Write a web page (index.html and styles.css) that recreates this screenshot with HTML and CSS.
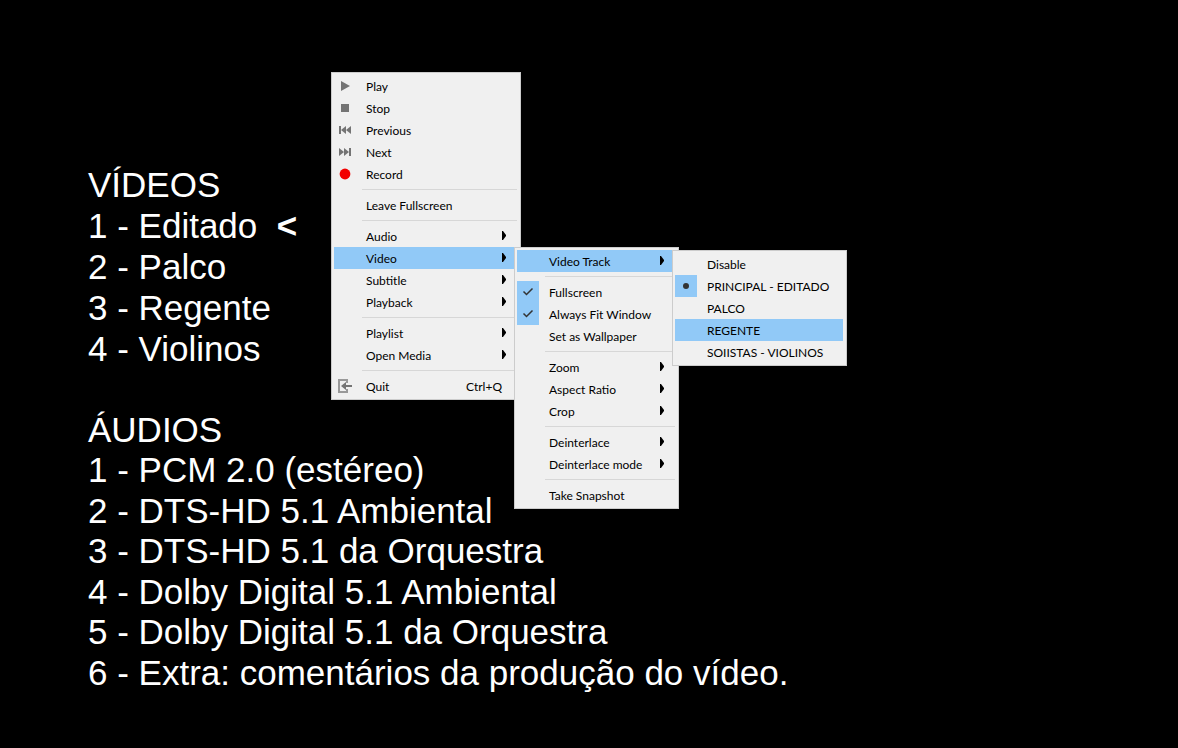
FILE: index.html
```html
<!DOCTYPE html>
<html lang="pt-BR">
<head>
<meta charset="utf-8">
<title>Vídeos e áudios</title>
<link rel="stylesheet" href="styles.css">
</head>
<body>
<main class="screen">
  <section class="tracks videos">
    <h2>VÍDEOS</h2>
    <ul>
      <li>1 - Editado&nbsp; <b>&lt;</b></li>
      <li>2 - Palco</li>
      <li>3 - Regente</li>
      <li>4 - Violinos</li>
    </ul>
  </section>
  <section class="tracks audios">
    <h2>ÁUDIOS</h2>
    <ul>
      <li>1 - PCM 2.0 (estéreo)</li>
      <li>2 - DTS-HD 5.1 Ambiental</li>
      <li>3 - DTS-HD 5.1 da Orquestra</li>
      <li>4 - Dolby Digital 5.1 Ambiental</li>
      <li>5 - Dolby Digital 5.1 da Orquestra</li>
      <li>6 - Extra: comentários da produção do vídeo.</li>
    </ul>
  </section>
</main>

<ul class="menu menu-main">
  <li><button class="item"><svg class="icon" viewBox="0 0 22 22"><path d="M7 6v10l9-5z"/></svg><span class="label">Play</span></button></li>
  <li><button class="item"><svg class="icon" viewBox="0 0 22 22"><path d="M7 7h8v8H7z"/></svg><span class="label">Stop</span></button></li>
  <li><button class="item"><svg class="icon" viewBox="0 0 22 22"><path d="M5 7h2v8H5zM12 7v8l-5-4zM17 7v8l-5-4z"/></svg><span class="label">Previous</span></button></li>
  <li><button class="item"><svg class="icon" viewBox="0 0 22 22"><path d="M15 7h2v8h-2zM5 7v8l5-4zM10 7v8l5-4z"/></svg><span class="label">Next</span></button></li>
  <li><button class="item"><svg class="icon record" viewBox="0 0 22 22"><circle cx="11" cy="11" r="5.4"/></svg><span class="label">Record</span></button></li>
  <li class="separator"></li>
  <li><button class="item"><span class="label">Leave Fullscreen</span></button></li>
  <li class="separator"></li>
  <li><button class="item"><span class="label">Audio</span><svg class="arrow" viewBox="0 0 4 9"><path d="M0 0h1l3 4v1l-3 4H0z"/></svg></button></li>
  <li class="parent">
    <button class="item active"><span class="label">Video</span><svg class="arrow" viewBox="0 0 4 9"><path d="M0 0h1l3 4v1l-3 4H0z"/></svg></button>
    <ul class="menu menu-video">
      <li class="parent">
        <button class="item active"><span class="label">Video Track</span><svg class="arrow" viewBox="0 0 4 9"><path d="M0 0h1l3 4v1l-3 4H0z"/></svg></button>
        <ul class="menu menu-track">
          <li><label class="item"><input type="radio" name="track"><span class="label">Disable</span></label></li>
          <li><label class="item"><input type="radio" name="track" checked><svg class="icon mark" viewBox="0 0 22 22"><circle cx="11" cy="11" r="3"/></svg><span class="label">PRINCIPAL - EDITADO</span></label></li>
          <li><label class="item"><input type="radio" name="track"><span class="label">PALCO</span></label></li>
          <li><label class="item active"><input type="radio" name="track"><span class="label">REGENTE</span></label></li>
          <li><label class="item"><input type="radio" name="track"><span class="label">SOIISTAS - VIOLINOS</span></label></li>
        </ul>
      </li>
      <li class="separator"></li>
      <li><label class="item"><input type="checkbox" checked><svg class="icon check" viewBox="0 0 22 22"><path d="M6.500 10.500l3 3 6-6"/></svg><span class="label">Fullscreen</span></label></li>
      <li><label class="item"><input type="checkbox" checked><svg class="icon check" viewBox="0 0 22 22"><path d="M6.500 10.500l3 3 6-6"/></svg><span class="label">Always Fit Window</span></label></li>
      <li><label class="item"><input type="checkbox"><span class="label">Set as Wallpaper</span></label></li>
      <li class="separator"></li>
      <li><button class="item"><span class="label">Zoom</span><svg class="arrow" viewBox="0 0 4 9"><path d="M0 0h1l3 4v1l-3 4H0z"/></svg></button></li>
      <li><button class="item"><span class="label">Aspect Ratio</span><svg class="arrow" viewBox="0 0 4 9"><path d="M0 0h1l3 4v1l-3 4H0z"/></svg></button></li>
      <li><button class="item"><span class="label">Crop</span><svg class="arrow" viewBox="0 0 4 9"><path d="M0 0h1l3 4v1l-3 4H0z"/></svg></button></li>
      <li class="separator"></li>
      <li><button class="item"><span class="label">Deinterlace</span><svg class="arrow" viewBox="0 0 4 9"><path d="M0 0h1l3 4v1l-3 4H0z"/></svg></button></li>
      <li><button class="item"><span class="label">Deinterlace mode</span><svg class="arrow" viewBox="0 0 4 9"><path d="M0 0h1l3 4v1l-3 4H0z"/></svg></button></li>
      <li class="separator"></li>
      <li><button class="item"><span class="label">Take Snapshot</span></button></li>
    </ul>
  </li>
  <li><button class="item"><span class="label">Subtitle</span><svg class="arrow" viewBox="0 0 4 9"><path d="M0 0h1l3 4v1l-3 4H0z"/></svg></button></li>
  <li><button class="item"><span class="label">Playback</span><svg class="arrow" viewBox="0 0 4 9"><path d="M0 0h1l3 4v1l-3 4H0z"/></svg></button></li>
  <li class="separator"></li>
  <li><button class="item"><span class="label">Playlist</span><svg class="arrow" viewBox="0 0 4 9"><path d="M0 0h1l3 4v1l-3 4H0z"/></svg></button></li>
  <li><button class="item"><span class="label">Open Media</span><svg class="arrow" viewBox="0 0 4 9"><path d="M0 0h1l3 4v1l-3 4H0z"/></svg></button></li>
  <li class="separator"></li>
  <li><button class="item"><svg class="icon" viewBox="0 0 22 22"><path class="frame" d="M13 8V5H5v12h8v-3"/><path d="M7 11l5-4v3h6v2h-6v3z"/></svg><span class="label">Quit</span><kbd>Ctrl+Q</kbd></button></li>
</ul>
</body>
</html>
```
FILE: styles.css
```css
* {
  box-sizing: border-box;
}

body {
  margin: 0;
  min-height: 100vh;
  background: #000;
}

ul {
  margin: 0;
  padding: 0;
  list-style: none;
}

.screen {
  display: flex;
  flex-direction: column;
  gap: 40px;
  padding: 164px 24px 0 88px;
  color: #fff;
  font-family: "Liberation Sans", Arial, sans-serif;
}

.tracks {
  font-size: 35px;
  line-height: 41px;
}

.tracks h2 {
  margin: 0;
  font-size: inherit;
  font-weight: 400;
}

.audios li {
  line-height: 40px;
}

.audios li:nth-child(even) {
  line-height: 41px;
}

.menu {
  position: absolute;
  padding: 2px 3px 2px 2px;
  border: 1px solid #ccc;
  background: #f0f0f0;
  color: #000;
  font: 12px/20px Lato, "Open Sans", sans-serif;
}

.menu-main {
  top: 72px;
  left: 331px;
  width: 190px;
}

.menu-video {
  top: 0;
  left: 180px;
  width: 165px;
}

.menu-track {
  top: 0;
  left: 155px;
  width: 175px;
}

.parent {
  position: relative;
}

.item {
  display: grid;
  grid-template-columns: 22px 1fr auto;
  column-gap: 10px;
  align-items: center;
  width: 100%;
  height: 22px;
  padding: 0;
  border: 0;
  background: none;
  color: inherit;
  font: inherit;
  text-align: left;
  white-space: nowrap;
}

.item > * {
  grid-row: 1;
}

.item.active {
  background: #91c9f7;
}

.label {
  grid-column: 2;
  padding-top: 2px;
}

.separator {
  height: 1px;
  margin: 4px 0 4px 28px;
  background: #d7d7d7;
}

.icon {
  grid-column: 1;
  width: 22px;
  height: 22px;
  fill: #747474;
}

.icon.record {
  fill: #f20000;
}

.icon.mark {
  fill: #333;
}

.icon.check {
  fill: none;
  stroke: #333;
  stroke-width: 1.5;
}

.icon .frame {
  fill: none;
  stroke: #999;
  stroke-width: 2;
}

.arrow {
  grid-column: 3;
  width: 4px;
  height: 9px;
  margin-right: 11px;
  margin-bottom: 1px;
}

kbd {
  grid-column: 3;
  margin-right: 15px;
  padding-top: 2px;
  font: inherit;
}

input {
  grid-column: 1;
  width: 22px;
  height: 22px;
  margin: 0;
  appearance: none;
}

input:checked {
  background: #91c9f7;
}
```
